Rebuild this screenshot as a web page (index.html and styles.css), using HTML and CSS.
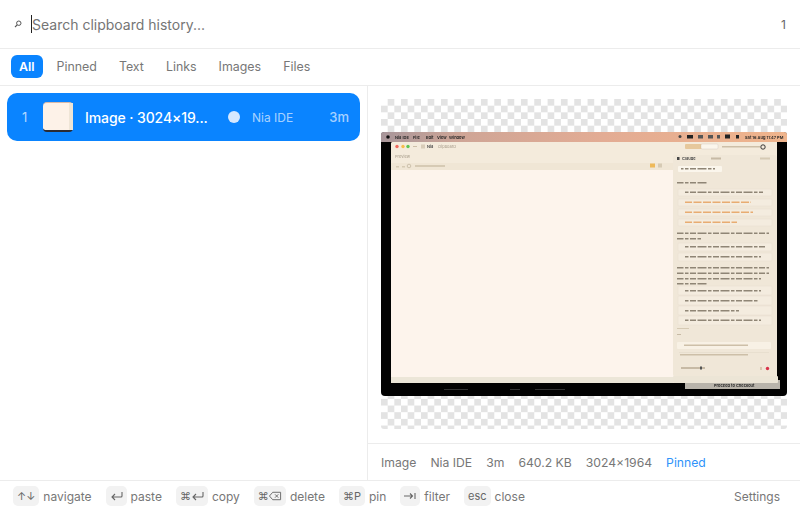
FILE: index.html
```html
<!DOCTYPE html>
<html lang="en">
<head>
    <meta charset="UTF-8">
    <meta name="viewport" content="width=device-width, initial-scale=1.0">
    <title>Clipboard History</title>
    <link rel="stylesheet" href="styles.css">
</head>
<body>
    <div class="app">
        <header class="search-bar">
            <svg class="search-icon" width="8" height="8" viewBox="0 0 8 8">
                <circle cx="4.8" cy="3.2" r="2.2" fill="none" stroke="#555" stroke-width="1"/>
                <path d="M3.2 4.8 L1 7" stroke="#555" stroke-width="1.1"/>
            </svg>
            <div class="search-input"><span class="caret"></span>Search clipboard history...</div>
            <span class="search-count">1</span>
        </header>

        <nav class="tabs">
            <span class="tab active">All</span>
            <span class="tab">Pinned</span>
            <span class="tab">Text</span>
            <span class="tab">Links</span>
            <span class="tab">Images</span>
            <span class="tab">Files</span>
        </nav>

        <main class="content">
            <section class="list">
                <div class="row selected">
                    <span class="row-index">1</span>
                    <div class="thumb"><span class="thumb-panel"></span></div>
                    <span class="row-title">Image · 3024×19...</span>
                    <span class="row-dot"></span>
                    <span class="row-app">Nia IDE</span>
                    <span class="row-time">3m</span>
                </div>
            </section>

            <section class="detail">
                <div class="preview">
                    <svg class="shot" width="406" height="264" viewBox="381 132 406 264">
                        <defs>
                            <linearGradient id="menuGrad" x1="0" x2="1" y1="0" y2="0">
                                <stop offset="0" stop-color="#a8969a"/>
                                <stop offset="0.2" stop-color="#cfa596"/>
                                <stop offset="0.55" stop-color="#e3ac94"/>
                                <stop offset="1" stop-color="#efb48c"/>
                            </linearGradient>
                            <filter id="soft" x="-5%" y="-5%" width="110%" height="110%">
                                <feGaussianBlur stdDeviation="0.6"/>
                            </filter>
                            <pattern id="wordsGrey" patternUnits="userSpaceOnUse" width="23" height="4">
                                <rect width="6" height="4" fill="#8f8575"/>
                                <rect x="7.500" width="9" height="4" fill="#8f8575"/>
                                <rect x="18" width="3.500" height="4" fill="#8f8575"/>
                            </pattern>
                            <pattern id="wordsOrange" patternUnits="userSpaceOnUse" width="19" height="4">
                                <rect width="8" height="4" fill="#e8ac72"/>
                                <rect x="9.500" width="8" height="4" fill="#e8ac72"/>
                            </pattern>
                        </defs>
                        <rect x="381" y="132" width="406" height="264" rx="4" fill="#020202"/>
                        <path d="M381 142 V135 Q381 132 384 132 H784 Q787 132 787 135 V142 Z" fill="url(#menuGrad)"/>
                        <g filter="url(#soft)">
                            <circle cx="388" cy="137" r="1.800" fill="#111"/>
                            <text class="shot-menu" x="395" y="138.500">Nia IDE</text>
                            <text class="shot-menu" x="413" y="138.500">File</text>
                            <text class="shot-menu" x="426" y="138.500">Edit</text>
                            <text class="shot-menu" x="437" y="138.500">View</text>
                            <text class="shot-menu" x="449" y="138.500">Window</text>
                            <circle cx="680" cy="136.500" r="1.500" fill="#444"/>
                            <rect x="687" y="135" width="6" height="3.500" fill="#222"/>
                            <rect x="698" y="135" width="5" height="3.500" fill="#555"/>
                            <rect x="708" y="135" width="5" height="3.500" fill="#555"/>
                            <rect x="717" y="135" width="3" height="3.500" fill="#555"/>
                            <rect x="725" y="134.500" width="5" height="4" fill="#222"/>
                            <rect x="736" y="135" width="3" height="3.500" fill="#222"/>
                            <text class="shot-menu" x="745" y="138.500">Sat 16 Aug 11:47 PM</text>
                        </g>

                        <rect x="391" y="142" width="386" height="241" rx="2" fill="#fdf4ec"/>
                        <path d="M391 144 Q391 142 393 142 H777 V170 H391 Z" fill="#f4ebdc"/>
                        <rect x="391" y="163" width="282" height="7" fill="#f0e6d5"/>
                        <rect x="391" y="377" width="282" height="6" fill="#ece6d8"/>
                        <g filter="url(#soft)">
                            <circle cx="397" cy="146.500" r="1.700" fill="#ee6a5f"/>
                            <circle cx="403" cy="146.500" r="1.700" fill="#f5bd4f"/>
                            <circle cx="408" cy="146.500" r="1.700" fill="#61c454"/>
                            <rect x="413" y="146" width="4" height="1" fill="#cdbfa8"/>
                            <rect x="421" y="144.500" width="4" height="4" fill="#d8ccb8"/>
                            <text class="shot-mini" x="427" y="148">Nia</text>
                            <text class="shot-faint" x="438" y="148">clipboard</text>
                            <text class="shot-faint" x="395" y="157.500">Preview</text>
                            <rect x="396" y="166" width="3" height="1.500" fill="#d6cab4"/>
                            <rect x="402" y="166" width="3" height="1.500" fill="#d6cab4"/>
                            <circle cx="409" cy="166" r="1.800" fill="none" stroke="#bfb29b" stroke-width="0.700"/>
                            <rect x="415" y="165" width="30" height="2" fill="#d6cab4"/>
                            <rect x="650" y="163.500" width="5" height="4" fill="#eeb95a"/>
                            <rect x="658" y="163.500" width="4" height="4" fill="#d6cab4"/>
                        </g>

                        <rect x="673" y="155" width="104" height="222" rx="3" fill="#f0e7d8"/>
                        <g filter="url(#soft)">
                            <rect x="685" y="144" width="19" height="5" rx="1" fill="#e6c89c"/>
                            <rect x="701" y="144" width="17" height="5" rx="1" fill="#fbf6ec" stroke="#a99" stroke-width="0.200"/>
                            <rect x="722" y="146" width="38" height="1.500" fill="#cdbfa8"/>
                            <circle cx="763" cy="147" r="2.200" fill="none" stroke="#222" stroke-width="0.900"/>
                            <rect x="677" y="157" width="2.500" height="3" fill="#444"/>
                            <text class="shot-mini" x="682" y="160">Claude</text>
                            <rect x="711" y="157.500" width="10" height="2" fill="#c7baa5"/>
                            <rect x="760" y="157.500" width="10" height="2" fill="#d6cab4"/>
                            <rect x="678" y="166" width="44" height="6" rx="1" fill="#fbf6ec"/>
                            <rect x="681" y="168" width="34" height="1.500" fill="url(#wordsGrey)"/>

                            <rect x="677" y="182" width="30" height="1.500" fill="url(#wordsGrey)"/>

                            <rect class="shot-card" x="678" y="189" width="94" height="7" rx="1"/>
                            <rect x="685" y="191.500" width="78" height="1.500" fill="url(#wordsGrey)"/>
                            <rect class="shot-card" x="678" y="199" width="94" height="7" rx="1"/>
                            <rect x="685" y="201.500" width="66" height="1.500" fill="url(#wordsOrange)"/>
                            <rect class="shot-card" x="678" y="209" width="94" height="7" rx="1"/>
                            <rect x="685" y="211.500" width="68" height="1.500" fill="url(#wordsOrange)"/>
                            <rect class="shot-card" x="678" y="219" width="94" height="7" rx="1"/>
                            <rect x="685" y="221.500" width="52" height="1.500" fill="url(#wordsOrange)"/>

                            <rect x="677" y="232.500" width="92" height="1.500" fill="url(#wordsGrey)"/>
                            <rect x="677" y="238" width="24" height="1.500" fill="url(#wordsGrey)"/>

                            <rect class="shot-card" x="678" y="243" width="94" height="8" rx="1"/>
                            <rect x="685" y="246" width="80" height="1.500" fill="url(#wordsGrey)"/>
                            <rect class="shot-card" x="678" y="253" width="94" height="8" rx="1"/>
                            <rect x="685" y="256" width="76" height="1.500" fill="url(#wordsGrey)"/>

                            <rect x="677" y="267" width="92" height="1.500" fill="url(#wordsGrey)"/>
                            <rect x="677" y="272.500" width="92" height="1.500" fill="url(#wordsGrey)"/>
                            <rect x="677" y="278" width="84" height="1.500" fill="url(#wordsGrey)"/>
                            <rect x="677" y="283" width="30" height="1.500" fill="url(#wordsGrey)"/>

                            <rect class="shot-card" x="678" y="286" width="94" height="9" rx="1"/>
                            <rect x="685" y="290" width="76" height="1.500" fill="url(#wordsGrey)"/>
                            <rect class="shot-card" x="678" y="296" width="94" height="9" rx="1"/>
                            <rect x="685" y="300" width="74" height="1.500" fill="url(#wordsGrey)"/>
                            <rect class="shot-card" x="678" y="306" width="94" height="9" rx="1"/>
                            <rect x="685" y="310" width="54" height="1.500" fill="url(#wordsGrey)"/>
                            <rect class="shot-card" x="678" y="316" width="94" height="9" rx="1"/>
                            <rect x="685" y="319.500" width="76" height="1.500" fill="url(#wordsGrey)"/>

                            <rect x="677" y="328" width="12" height="1" fill="#d6cab4"/>
                            <rect x="677" y="334" width="4" height="1" fill="#c7baa5"/>

                            <rect x="677" y="342" width="94" height="7" rx="1" fill="#f8f1e5"/>
                            <rect x="684" y="344.500" width="64" height="1.500" fill="#cdbfa8"/>
                            <rect x="679" y="352" width="90" height="1" fill="#e8dfcf"/>
                            <rect x="680" y="354" width="68" height="1.500" fill="#cdbfa8"/>
                            <rect x="681" y="367" width="24" height="2" fill="#c7baa5"/>
                            <rect x="700" y="366.500" width="2" height="3" fill="#555"/>
                            <rect x="760" y="367" width="2" height="3" fill="#d9c7ad"/>
                            <circle cx="767.500" cy="368.500" r="1.700" fill="#d8334a"/>
                        </g>

                        <rect x="685" y="380" width="95" height="9" fill="#b9b4ab"/>
                        <rect x="673" y="376" width="105" height="7" rx="1" fill="#ece5d6"/>
                        <g filter="url(#soft)">
                            <text class="shot-menu" x="714" y="387">Proceed to Checkout</text>
                            <rect x="444" y="389" width="24" height="1" fill="#333"/>
                            <rect x="510" y="389" width="10" height="1" fill="#333"/>
                            <rect x="535" y="389" width="30" height="1" fill="#333"/>
                        </g>
                    </svg>
                </div>
                <div class="meta">
                    <span>Image</span>
                    <span>Nia IDE</span>
                    <span>3m</span>
                    <span>640.2 KB</span>
                    <span>3024×1964</span>
                    <span class="pinned">Pinned</span>
                </div>
            </section>
        </main>

        <footer class="footer">
            <div class="hint"><kbd>↑↓</kbd>navigate</div>
            <div class="hint"><kbd><svg class="key-icon" width="13" height="12" viewBox="1 0 13 12"><path d="M13 2 V6 Q13 7 12 7 H3 M6 4 L3 7 L6 10" fill="none" stroke="#666" stroke-width="1.100"/></svg></kbd>paste</div>
            <div class="hint"><kbd>⌘<svg class="key-icon" width="13" height="12" viewBox="1 0 13 12"><path d="M13 2 V6 Q13 7 12 7 H3 M6 4 L3 7 L6 10" fill="none" stroke="#666" stroke-width="1.100"/></svg></kbd>copy</div>
            <div class="hint"><kbd>⌘<svg class="key-icon" width="13" height="12" viewBox="1 0 14 12"><path d="M5 2 H13.500 V10 H5 L1.500 6 Z M7.500 4.200 L11 7.800 M11 4.200 L7.500 7.800" fill="none" stroke="#666" stroke-width="1"/></svg></kbd>delete</div>
            <div class="hint"><kbd>⌘P</kbd>pin</div>
            <div class="hint"><kbd><svg class="key-icon" width="12" height="12" viewBox="1 0 12 12"><path d="M1 6 H9.500 M7 3.500 L9.500 6 L7 8.500 M12 3 V9" fill="none" stroke="#666" stroke-width="1.100"/></svg></kbd>filter</div>
            <div class="hint"><kbd>esc</kbd>close</div>
            <span class="settings">Settings</span>
        </footer>
    </div>
</body>
</html>
```

FILE: styles.css
```css
* {
    box-sizing: border-box;
}

body {
    margin: 0;
    background: #fff;
    font-family: Inter, "Liberation Sans", sans-serif;
    color: #777;
}

.app {
    display: flex;
    flex-direction: column;
    width: 800px;
    height: 511px;
    overflow: hidden;
}

/* Search */
.search-bar {
    display: flex;
    align-items: center;
    flex: 0 0 49px;
    padding: 0 14px;
    border-bottom: 1px solid #ececec;
}

.search-icon {
    margin-right: 9px;
}

.search-input {
    display: flex;
    align-items: center;
    flex: 1;
    font-size: 14px;
    color: #757575;
}

.caret {
    width: 1px;
    height: 18px;
    background: #222;
}

.search-count {
    font-size: 12px;
    color: #666;
}

/* Tabs */
.tabs {
    display: flex;
    align-items: center;
    gap: 6px;
    flex: 0 0 37px;
    padding: 0 11px 1px;
    border-bottom: 1px solid #ececec;
}

.tab {
    padding: 4px 8px;
    border-radius: 6px;
    font-size: 12.4px;
    line-height: 15px;
    color: #777;
}

.tab.active {
    background: #0a84ff;
    color: #fff;
    font-weight: 600;
}

/* List and detail */
.content {
    display: flex;
    flex: 1;
    min-height: 0;
}

.list {
    flex: 0 0 368px;
    padding: 7px;
    border-right: 1px solid #ececec;
}

.row {
    display: flex;
    align-items: center;
    width: 353px;
    height: 48px;
    padding: 0 11px 0 15px;
    border-radius: 10px;
    background: #0a84ff;
    color: #fff;
}

.row-index {
    width: 21px;
    font-size: 13px;
    color: rgba(255, 255, 255, 0.7);
}

.thumb {
    display: flex;
    justify-content: flex-end;
    flex: 0 0 30px;
    height: 30px;
    border-radius: 4px;
    border-top: 1px solid #d9b9a8;
    border-bottom: 2px solid #2b2b33;
    background: #fdf2e8;
}

.thumb-panel {
    width: 4px;
    background: #efe5d6;
}

.row-title {
    flex: 0 0 143px;
    margin-left: 12px;
    font-size: 14px;
    letter-spacing: -0.1px;
    font-weight: 500;
    white-space: nowrap;
}

.row-dot {
    width: 12px;
    height: 12px;
    border-radius: 50%;
    background: #d6e8ff;
}

.row-app {
    margin-left: 12px;
    font-size: 12px;
    color: rgba(255, 255, 255, 0.65);
}

.row-time {
    margin-left: auto;
    font-size: 13px;
    font-weight: 500;
    color: rgba(255, 255, 255, 0.65);
}

.detail {
    display: flex;
    flex-direction: column;
    flex: 1;
    min-width: 0;
}

.preview {
    display: flex;
    align-items: center;
    flex: 1;
    margin: 13px 13px 14px;
    border-radius: 3px;
    background: repeating-conic-gradient(#fff 0 25%, #e3e3e3 0 50%) 6.67px 0 / 13.34px 13.34px;
}

.shot {
    display: block;
}

.shot-menu {
    font-size: 4px;
    font-weight: 600;
    fill: #222;
}

.shot-mini {
    font-size: 4px;
    font-weight: 600;
    fill: #444;
}

.shot-faint {
    font-size: 4px;
    fill: #a59a88;
}

.shot-card {
    fill: #f4ecdf;
    stroke: #e6dccb;
    stroke-width: 0.4;
}

.meta {
    display: flex;
    align-items: center;
    gap: 14px;
    flex: 0 0 37px;
    padding: 0 14px 0 13px;
    border-top: 1px solid #ececec;
    font-size: 12.2px;
    white-space: nowrap;
}

.pinned {
    color: #2f93fa;
}

/* Footer */
.footer {
    display: flex;
    align-items: center;
    gap: 14px;
    flex: 0 0 31px;
    padding: 0 20px 0 13px;
    border-top: 1px solid #ececec;
    font-size: 12px;
    color: #777;
}

.hint {
    display: flex;
    align-items: center;
    gap: 4px;
}

kbd {
    display: flex;
    align-items: center;
    justify-content: center;
    height: 20px;
    padding: 0 4px;
    border-radius: 5px;
    background: #f2f2f2;
    font-family: Inter, "DejaVu Sans", sans-serif;
    font-size: 11px;
    color: #666;
}

.key-icon {
    display: block;
}

.settings {
    margin-left: auto;
}
```
